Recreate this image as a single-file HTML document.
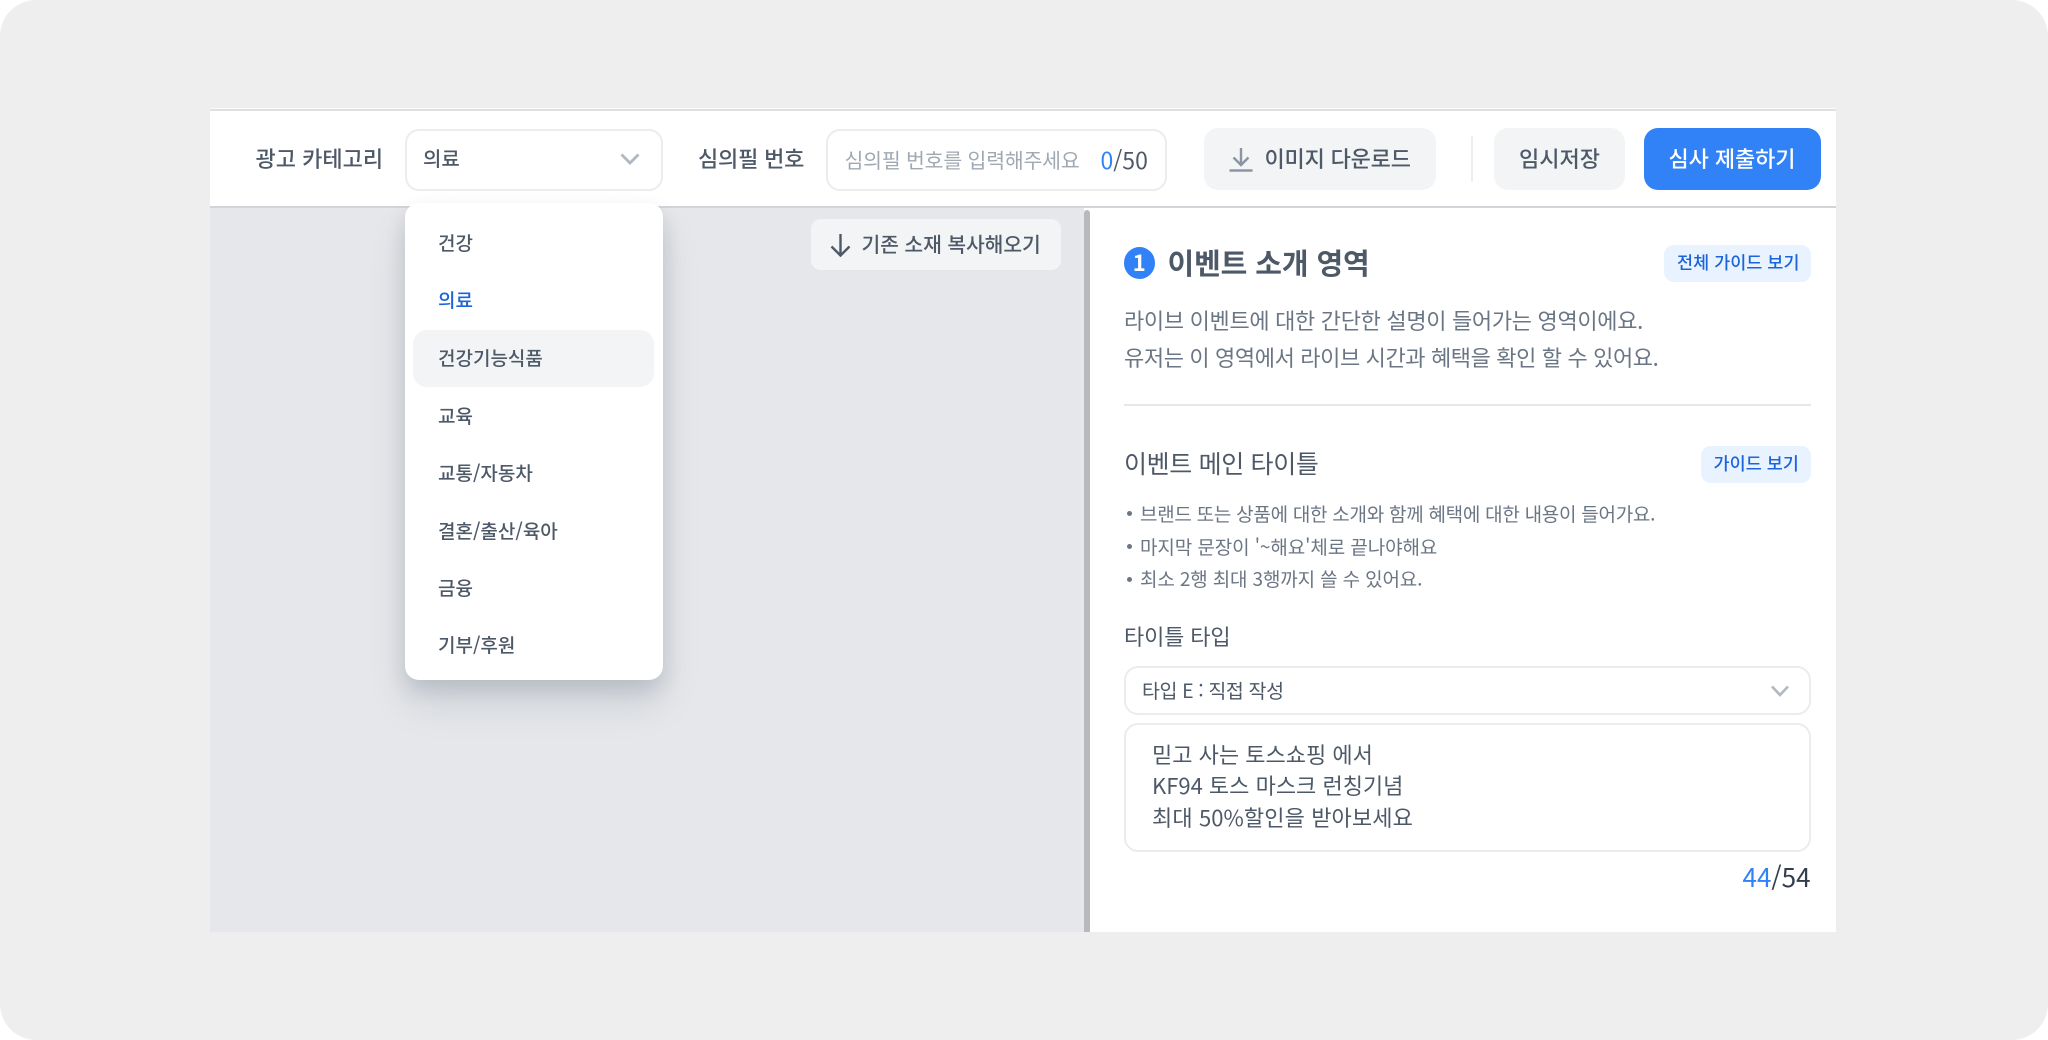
<!DOCTYPE html>
<html lang="ko">
<head>
<meta charset="utf-8">
<title>광고 소재</title>
<style>
html,body{margin:0;padding:0;width:2048px;height:1040px;overflow:hidden;background:#fff}
body{position:relative;font-family:"Liberation Sans","Noto Sans CJK KR",sans-serif}
.bg{position:absolute;left:0;top:0;width:2048px;height:1040px;background:#eeeeee;border-radius:36px}
.b{position:absolute;box-sizing:border-box}
.t{position:absolute;white-space:nowrap;font-family:"Noto Sans CJK KR",sans-serif;color:#4e5968;line-height:1.2;filter:blur(.3px)}
.m{font-weight:500}
svg{position:absolute;overflow:visible}
</style>
</head>
<body>
<div class="bg"></div>

<!-- panels -->
<div class="b" style="left:210px;top:108px;width:1626px;height:1px;background:#fbfbfb"></div>
<div class="b" style="left:210px;top:109px;width:1626px;height:2px;background:#dfdfdf"></div>
<div class="b" style="left:210px;top:207px;width:874px;height:725px;background:#e5e7ea"></div>
<div class="b" style="left:1084px;top:207px;width:752px;height:725px;background:#fff"></div>
<div class="b" style="left:1084px;top:210px;width:6px;height:722px;background:#b7b9bb;border-radius:3px 3px 0 0"></div>
<div class="b" style="left:210px;top:111px;width:1626px;height:97px;background:#fff;border-bottom:2px solid #d1d5d9"></div>

<!-- toolbar -->
<div class="t m" style="left:255.5px;top:145px;font-size:22px">광고 카테고리</div>
<div class="b" style="left:405px;top:129px;width:258px;height:62px;border:2px solid #eaecef;border-radius:14px;background:#fff"></div>
<div class="t m" style="left:423px;top:146px;font-size:20px">의료</div>
<svg style="left:620px;top:153px" width="20" height="12" viewBox="0 0 20 12"><path d="M1.5 1.5 L10 10 L18.5 1.5" fill="none" stroke="#b0b8c1" stroke-width="2.8"/></svg>

<div class="t m" style="left:698px;top:145px;font-size:22px;letter-spacing:-.2px">심의필 번호</div>
<div class="b" style="left:826px;top:129px;width:341px;height:62px;border:2px solid #eaecef;border-radius:14px;background:#fff"></div>
<div class="t" style="left:844.5px;top:147px;font-size:20.5px;color:#a0a9b3;letter-spacing:-.2px">심의필 번호를 입력해주세요</div>
<div class="t" style="left:1100.5px;top:146px;font-size:23px;color:#4e5968"><span style="color:#3182f6">0</span>/50</div>

<div class="b" style="left:1204px;top:128px;width:232px;height:62px;border-radius:14px;background:#f2f4f6"></div>
<svg style="left:1229px;top:147px" width="24" height="25" viewBox="0 0 24 25"><path d="M12 1 V18 M4.5 10.5 L12 18 L19.5 10.5 M0.5 23.5 H23.5" fill="none" stroke="#8b95a1" stroke-width="2.4"/></svg>
<div class="t m" style="left:1264.5px;top:145px;font-size:22px;letter-spacing:-.2px">이미지 다운로드</div>

<div class="b" style="left:1471px;top:136px;width:2px;height:46px;background:#eceef0"></div>
<div class="b" style="left:1493.5px;top:128px;width:131.5px;height:62px;border-radius:14px;background:#f2f4f6"></div>
<div class="t m" style="left:1519px;top:145px;font-size:22px">임시저장</div>
<div class="b" style="left:1644px;top:128px;width:177px;height:62px;border-radius:14px;background:#3182f6"></div>
<div class="t m" style="left:1668.5px;top:145px;font-size:22px;color:#fff;letter-spacing:-.1px">심사 제출하기</div>

<!-- copy button -->
<div class="b" style="left:810.5px;top:219px;width:250.5px;height:51px;border-radius:10px;background:#f2f4f6"></div>
<svg style="left:829.5px;top:233px" width="21" height="24" viewBox="0 0 21 24"><path d="M10.5 1 V22.5 M1.5 13.5 L10.5 22.5 L19.5 13.5" fill="none" stroke="#4e5968" stroke-width="2.4"/></svg>
<div class="t m" style="left:861.5px;top:231px;font-size:20.4px;letter-spacing:-.1px">기존 소재 복사해오기</div>

<!-- dropdown -->
<div class="b" style="left:405px;top:203px;width:258px;height:477px;border-radius:14px;background:#fff;box-shadow:0 10px 20px rgba(0,27,55,.12),0 24px 40px rgba(0,27,55,.10)"></div>
<div class="b" style="left:413px;top:330px;width:241px;height:57px;border-radius:14px;background:#f2f4f6"></div>
<div class="t m" style="left:438px;top:232px;font-size:19px">건강</div>
<div class="t m" style="left:438px;top:289px;font-size:19px;color:#1b64da">의료</div>
<div class="t m" style="left:438px;top:347px;font-size:19px">건강기능식품</div>
<div class="t m" style="left:438px;top:405px;font-size:19px">교육</div>
<div class="t m" style="left:438px;top:462px;font-size:19px">교통/자동차</div>
<div class="t m" style="left:438px;top:520px;font-size:19px">결혼/출산/육아</div>
<div class="t m" style="left:438px;top:577px;font-size:19px">금융</div>
<div class="t m" style="left:438px;top:634px;font-size:19px">기부/후원</div>

<!-- right panel -->
<div class="b" style="left:1123.5px;top:247px;width:31.5px;height:32px;border-radius:50%;background:#3182f6"></div>
<div class="t" style="left:1123.5px;top:248px;width:31.5px;text-align:center;font-size:22px;font-weight:700;color:#fff;line-height:29px">1</div>
<div class="t" style="left:1167.5px;top:245px;font-size:29px;font-weight:700;letter-spacing:-.1px">이벤트 소개 영역</div>
<div class="b" style="left:1664px;top:245px;width:147px;height:37px;border-radius:10px;background:#e8f3ff"></div>
<div class="t m" style="left:1677px;top:252px;font-size:17.5px;color:#1b64da">전체 가이드 보기</div>

<div class="t" style="left:1124px;top:307px;font-size:22px;color:#6b7684;letter-spacing:-.32px">라이브 이벤트에 대한 간단한 설명이 들어가는 영역이에요.</div>
<div class="t" style="left:1124px;top:344px;font-size:22px;color:#6b7684;letter-spacing:-.38px">유저는 이 영역에서 라이브 시간과 혜택을 확인 할 수 있어요.</div>
<div class="b" style="left:1124px;top:404px;width:687px;height:2px;background:#e5e8eb"></div>

<div class="t" style="left:1124px;top:448px;font-size:25px;letter-spacing:-.35px">이벤트 메인 타이틀</div>
<div class="b" style="left:1701px;top:446px;width:110px;height:37px;border-radius:10px;background:#e8f3ff"></div>
<div class="t m" style="left:1713.5px;top:453px;font-size:17.5px;color:#1b64da">가이드 보기</div>

<div class="b" style="left:1127px;top:511px;width:5px;height:5px;border-radius:50%;background:#6b7684"></div>
<div class="t" style="left:1140px;top:502.5px;font-size:19px;color:#6b7684;letter-spacing:-.27px">브랜드 또는 상품에 대한 소개와 함께 혜택에 대한 내용이 들어가요.</div>
<div class="b" style="left:1127px;top:544px;width:5px;height:5px;border-radius:50%;background:#6b7684"></div>
<div class="t" style="left:1140px;top:535.5px;font-size:19px;color:#6b7684;letter-spacing:-.1px">마지막 문장이 '~해요'체로 끝나야해요</div>
<div class="b" style="left:1127px;top:577px;width:5px;height:5px;border-radius:50%;background:#6b7684"></div>
<div class="t" style="left:1140px;top:568px;font-size:19px;color:#6b7684;letter-spacing:-.15px">최소 2행 최대 3행까지 쓸 수 있어요.</div>

<div class="t" style="left:1124px;top:623px;font-size:22px;letter-spacing:-.15px">타이틀 타입</div>
<div class="b" style="left:1124px;top:666px;width:687px;height:49px;border:2px solid #eaecef;border-radius:14px;background:#fff"></div>
<div class="t" style="left:1142px;top:678px;font-size:19.5px;letter-spacing:-.4px">타입 E : 직접 작성</div>
<svg style="left:1770.5px;top:685px" width="18" height="12" viewBox="0 0 18 12"><path d="M1 1.5 L9 10 L17 1.5" fill="none" stroke="#b0b8c1" stroke-width="2.6"/></svg>

<div class="b" style="left:1124px;top:723px;width:687px;height:129px;border:2px solid #eaecef;border-radius:14px;background:#fff"></div>
<div class="t" style="left:1152px;top:741px;font-size:22px">믿고 사는 토스쇼핑 에서</div>
<div class="t" style="left:1152px;top:772px;font-size:22px">KF94 토스 마스크 런칭기념</div>
<div class="t" style="left:1152px;top:804px;font-size:22px;letter-spacing:.1px">최대 50%할인을 받아보세요</div>

<div class="t" style="right:237.5px;top:860.5px;font-size:26px;color:#333d4b"><span style="color:#3182f6">44</span>/54</div>
</body>
</html>
